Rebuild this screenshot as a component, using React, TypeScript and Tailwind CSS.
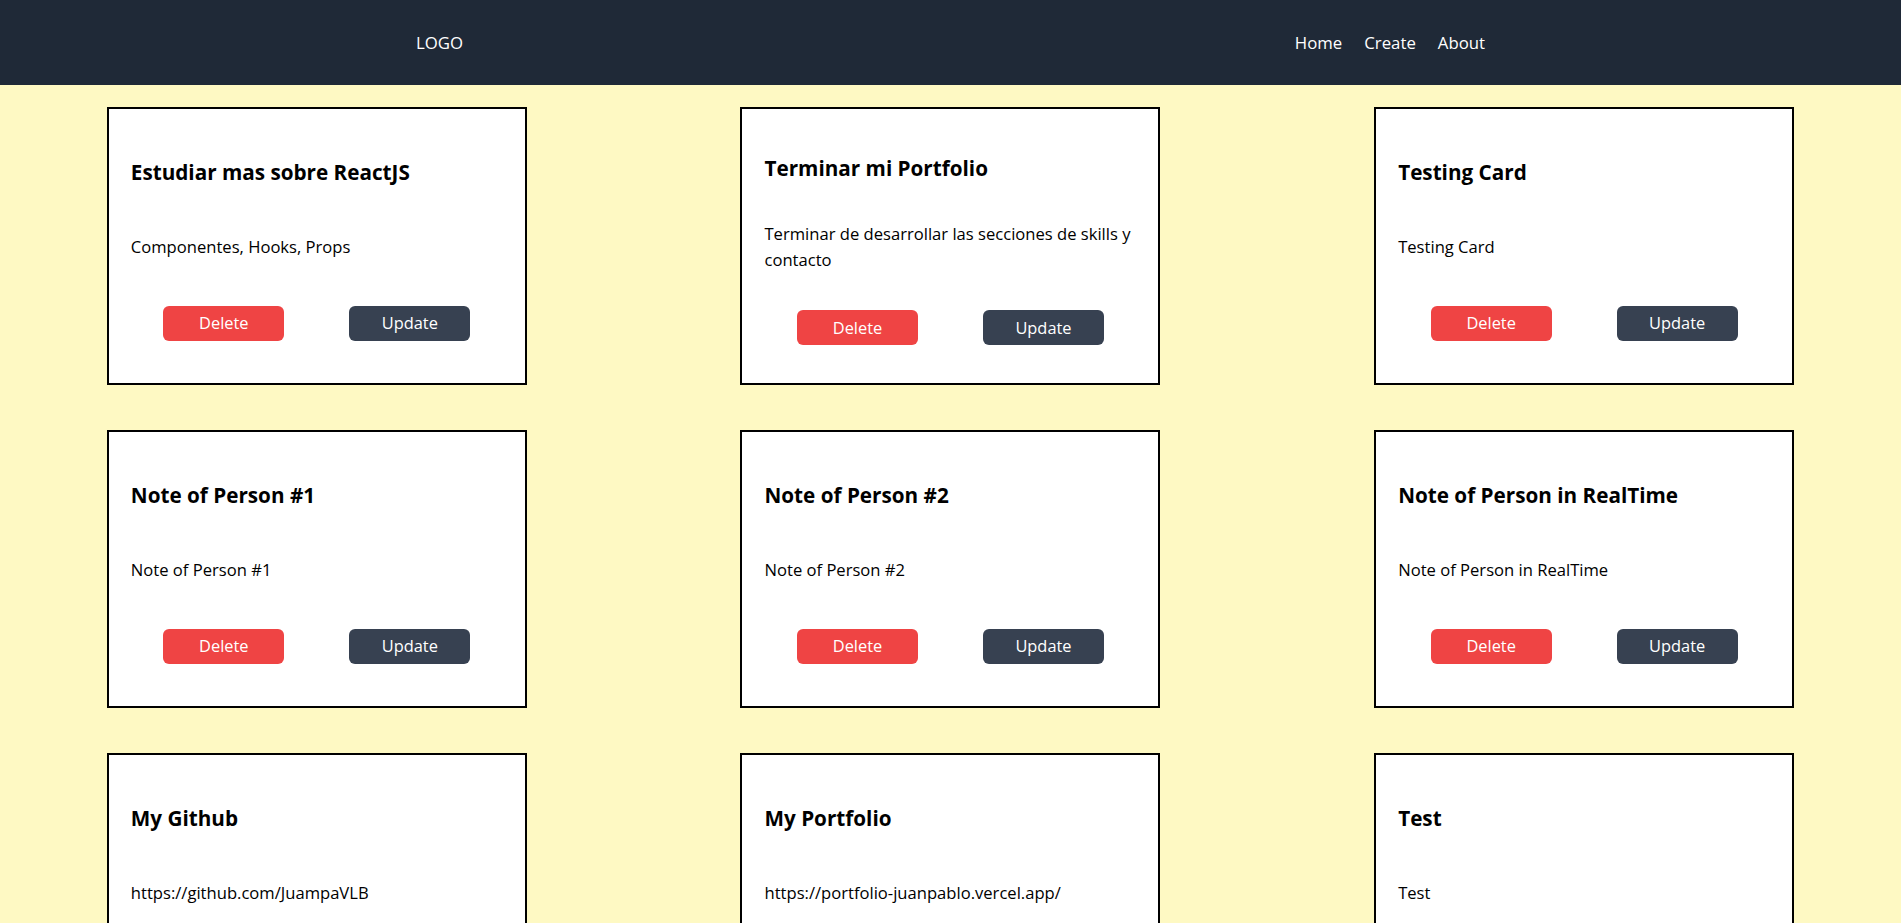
import React from 'react';

interface Note {
  id: number;
  title: string;
  description: string;
}

const NOTES: Note[] = [
  { id: 1, title: 'Estudiar mas sobre ReactJS', description: 'Componentes, Hooks, Props' },
  { id: 2, title: 'Terminar mi Portfolio', description: 'Terminar de desarrollar las secciones de skills y contacto' },
  { id: 3, title: 'Testing Card', description: 'Testing Card' },
  { id: 4, title: 'Note of Person #1', description: 'Note of Person #1' },
  { id: 5, title: 'Note of Person #2', description: 'Note of Person #2' },
  { id: 6, title: 'Note of Person in RealTime', description: 'Note of Person in RealTime' },
  { id: 7, title: 'My Github', description: 'https://github.com/JuampaVLB' },
  { id: 8, title: 'My Portfolio', description: 'https://portfolio-juanpablo.vercel.app/' },
  { id: 9, title: 'Test', description: 'Test' },
];

const NoteCard: React.FC<{ note: Note }> = ({ note }) => (
  <div className="w-[420px] h-[278px] bg-white border-2 border-black px-[22px] pt-[25px] pb-[19px] flex flex-col justify-around">
    <h2 className="text-[20.7px] leading-[31px] font-bold text-black">{note.title}</h2>
    <p className="text-[16.6px] leading-[26.4px] text-black">{note.description}</p>
    <div className="flex justify-around">
      <button className="w-[121px] h-[35px] rounded-[6px] bg-[#ef4444] text-white text-[16.4px]">Delete</button>
      <button className="w-[121px] h-[35px] rounded-[6px] bg-[#374151] text-white text-[16.4px]">Update</button>
    </div>
  </div>
);

export default function App() {
  return (
    <div className="min-h-screen bg-[#fef9c3] font-['Open_Sans',sans-serif]">
      {/* Navbar */}
      <header className="h-[85px] bg-[#1f2937] flex items-center justify-around text-white text-[16.8px]">
        <span>LOGO</span>
        <nav className="flex gap-[22px]">
          <a href="#">Home</a>
          <a href="#">Create</a>
          <a href="#">About</a>
        </nav>
      </header>

      {/* Notes */}
      <main className="grid grid-cols-3 gap-y-[45px] pt-[22px] pb-[22px]">
        {NOTES.map((n) => (
          <div key={n.id} className="flex justify-center">
            <NoteCard note={n} />
          </div>
        ))}
      </main>
    </div>
  );
}
